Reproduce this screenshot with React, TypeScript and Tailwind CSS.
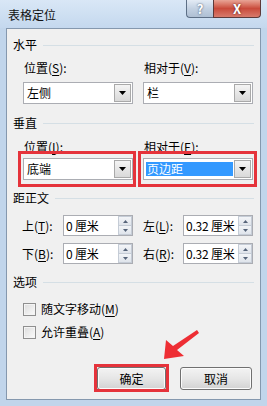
/**
 * TablePositionDialog — Word "表格定位" dialog with annotation marks
 */

import { ReactNode } from 'react';

function Mn({ children }: { children: ReactNode }) {
  return <span className="underline underline-offset-2">{children}</span>;
}

function GroupHeader({ label, className }: { label: string; className: string }) {
  return (
    <div className={`flex h-[16px] items-center pl-[6px] pr-[6px] ${className}`}>
      <span>{label}</span>
      <div className="ml-[6px] h-px flex-1 bg-[#d5dfe5]" />
    </div>
  );
}

function DropArrow() {
  return (
    <div className="mr-px flex h-[18px] w-[17px] shrink-0 items-center justify-center border border-[#a9a9a9] bg-gradient-to-b from-[#f4f4f4] to-[#d9d9d9]">
      <svg width="7" height="4" viewBox="0 0 7 4">
        <path d="M0 0h7L3.5 4z" fill="#000" />
      </svg>
    </div>
  );
}

function Dropdown({ value, selected }: { value: string; selected?: boolean }) {
  return (
    <div className="flex h-[22px] items-center border border-[#abadb3] bg-white">
      {selected ? (
        <span className="ml-[2px] mr-px h-[14px] flex-1 bg-[#3399ff] pl-px leading-[14px] text-white">{value}</span>
      ) : (
        <span className="flex-1 pl-[3px]">{value}</span>
      )}
      <DropArrow />
    </div>
  );
}

function RedMark({ children, className }: { children: ReactNode; className: string }) {
  return (
    <div className="relative">
      {children}
      <span className={`pointer-events-none absolute border-[3px] border-[#e5333b] ${className}`} />
    </div>
  );
}

function Spinner({ value, width }: { value: string; width: string }) {
  return (
    <div className={`flex h-[21px] border border-[#abadb3] bg-white ${width}`}>
      <span className="flex-1 overflow-hidden whitespace-nowrap pl-[2px] text-[12px] leading-[19px] tracking-[-0.2px]">{value}</span>
      <div className="flex w-[14px] shrink-0 flex-col">
        <div className="flex flex-1 items-center justify-center border border-[#c5ccd6] bg-gradient-to-b from-[#f3f5f8] to-[#dfe4eb]">
          <svg width="5" height="3" viewBox="0 0 5 3">
            <path d="M0 3h5L2.5 0z" fill="#56647a" />
          </svg>
        </div>
        <div className="flex flex-1 items-center justify-center border border-t-0 border-[#c5ccd6] bg-gradient-to-b from-[#f3f5f8] to-[#dfe4eb]">
          <svg width="5" height="3" viewBox="0 0 5 3">
            <path d="M0 0h5L2.5 3z" fill="#56647a" />
          </svg>
        </div>
      </div>
    </div>
  );
}

function Check({ children, className }: { children: ReactNode; className: string }) {
  return (
    <div className={`flex h-[16px] items-center gap-[5px] pl-[16px] ${className}`}>
      <span className="h-[13px] w-[13px] border border-[#8f8f8f] bg-gradient-to-br from-[#dcdcdc] to-[#fbfbfb] shadow-[inset_0_0_0_1px_#f4f4f4]" />
      <span>{children}</span>
    </div>
  );
}

function Button({ label, width }: { label: string; width: string }) {
  return (
    <div
      className={`flex h-[23px] items-center justify-center rounded-[3px] border border-[#707070] bg-gradient-to-b from-[#f3f3f3] via-[#e6e6e6] to-[#d2d2d2] shadow-[inset_0_0_0_1px_#fbfbfb] ${width}`}
    >
      {label}
    </div>
  );
}

export default function App() {
  return (
    <div className="relative flex h-[406px] w-[267px] flex-col overflow-hidden bg-[#c1d5eb] font-['Noto_Sans_CJK_SC',sans-serif] text-[12px] leading-[16px] text-black">
      {/* Title bar */}
      <div className="flex h-[28px] shrink-0 items-start bg-gradient-to-b from-[#d9e7f6] to-[#c4d8ee]">
        <div className="ml-[8px] mt-[7px] text-[#111]">表格定位</div>
        <div className="ml-auto mr-[6px] flex">
          <div className="flex h-[18px] w-[27px] items-center justify-center rounded-bl-[4px] border border-t-0 border-r-0 border-[#5d6f86] bg-gradient-to-b from-[#e3ebf5] via-[#c3d1e2] to-[#aebfd3] text-[13px] font-bold text-white [text-shadow:0_0_2px_#30405a]">
            ?
          </div>
          <div className="flex h-[18px] w-[48px] items-center justify-center rounded-br-[4px] border border-t-0 border-[#5d3a3a] bg-gradient-to-b from-[#e8a496] via-[#c94a3b] to-[#d77a6b] text-[13px] font-bold text-white [text-shadow:0_0_2px_#4a1010]">
            X
          </div>
        </div>
      </div>

      {/* Panel */}
      <div className="mx-[6px] mb-[6px] flex flex-1 flex-col border border-[#8598ae] bg-[#f0f0f0]">
        <GroupHeader label="水平" className="mt-[8px]" />
        <div className="mt-[7px] grid grid-cols-[110px_110px] gap-x-[10px] pl-[16px]">
          <span className="pl-px">位置(<Mn>S</Mn>):</span>
          <span className="pl-px">相对于(<Mn>V</Mn>):</span>
        </div>
        <div className="mt-[6px] grid grid-cols-[110px_110px] gap-x-[10px] pl-[16px]">
          <Dropdown value="左侧" />
          <Dropdown value="栏" />
        </div>

        <GroupHeader label="垂直" className="mt-[11px]" />
        <div className="mt-[8px] grid grid-cols-[110px_110px] gap-x-[10px] pl-[16px]">
          <span className="pl-px">位置(<Mn>I</Mn>):</span>
          <span className="pl-px">相对于(<Mn>E</Mn>):</span>
        </div>
        <div className="mt-[3px] grid grid-cols-[110px_110px] gap-x-[10px] pl-[16px]">
          <RedMark className="-bottom-[7px] -left-[5px] -right-[3px] -top-[7px]">
            <Dropdown value="底端" />
          </RedMark>
          <RedMark className="-bottom-[7px] -left-[5px] -right-[4px] -top-[7px]">
            <Dropdown value="页边距" selected />
          </RedMark>
        </div>

        <GroupHeader label="距正文" className="mt-[10px]" />
        <div className="mt-[9px] flex items-center pl-[15px]">
          <span className="w-[41px]">上(<Mn>T</Mn>):</span>
          <Spinner value="0 厘米" width="w-[70px]" />
          <span className="ml-[10px] w-[40px]">左(<Mn>L</Mn>):</span>
          <Spinner value="0.32 厘米" width="w-[70px]" />
        </div>
        <div className="mt-[7px] flex items-center pl-[15px]">
          <span className="w-[41px]">下(<Mn>B</Mn>):</span>
          <Spinner value="0 厘米" width="w-[70px]" />
          <span className="ml-[10px] w-[40px]">右(<Mn>R</Mn>):</span>
          <Spinner value="0.32 厘米" width="w-[70px]" />
        </div>

        <GroupHeader label="选项" className="mt-[10px]" />
        <Check className="mt-[11px]">
          随文字移动(<Mn>M</Mn>)
        </Check>
        <Check className="mt-[7px]">
          允许重叠(<Mn>A</Mn>)
        </Check>

        <div className="mt-[27px] flex justify-end gap-[14px] pr-[8px]">
          <RedMark className="-bottom-[2px] -left-[3px] -right-[3px] -top-[3px]">
            <Button label="确定" width="w-[69px]" />
          </RedMark>
          <Button label="取消" width="w-[72px]" />
        </div>
      </div>

      {/* Annotation arrow */}
      <svg className="pointer-events-none absolute left-0 top-0" width="267" height="406" viewBox="0 0 267 406">
        <polygon points="164,359 166,340 173,346 197,330 199,333 177,350 184,356" fill="#ee2e34" />
      </svg>
    </div>
  );
}
